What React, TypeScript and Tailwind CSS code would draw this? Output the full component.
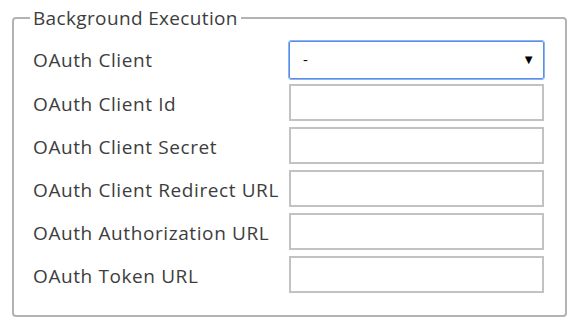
import React from "react";

const rows = [
  "OAuth Client Id",
  "OAuth Client Secret",
  "OAuth Client Redirect URL",
  "OAuth Authorization URL",
  "OAuth Token URL",
];

export default function App() {
  return (
    <div className="w-[578px] h-[328px] bg-white pt-[6px] pl-[12px]" style={{ fontFamily: '"Open Sans", "Noto Sans", sans-serif' }}>
      <fieldset className="w-[555px] border-2 border-[#b3b3b3] rounded-[4px] pl-[19px] pr-[21px] pt-[11px] pb-[22px]">
        <legend className="px-[3px] -ml-[3px] text-[19px] leading-[24px] tracking-[0.35px] text-[#3d3d3d]">Background Execution</legend>
        <div className="flex flex-col gap-[6px]">
          <div className="flex items-center h-[37px]">
            <div className="w-[256px] pt-[2px] text-[19px] tracking-[0.6px] text-[#3d3d3d]">OAuth Client</div>
            <div className="w-[255px] h-[38px] border border-[#5b8de8] outline outline-1 outline-[#8ab2f5] rounded-[2px] flex items-center justify-between pl-[13px] pr-[8px] text-[15px] text-black">
              <span>-</span>
              <span className="text-[13px]">▼</span>
            </div>
          </div>
          {rows.map((r) => (
            <div key={r} className="flex items-center h-[37px]">
              <div className="w-[256px] pt-[3px] text-[19px] tracking-[0.6px] text-[#3d3d3d] whitespace-nowrap">{r}</div>
              <div className="w-[255px] h-[37px] border-2 border-[#c2c2c2] bg-white" />
            </div>
          ))}
        </div>
      </fieldset>
    </div>
  );
}
